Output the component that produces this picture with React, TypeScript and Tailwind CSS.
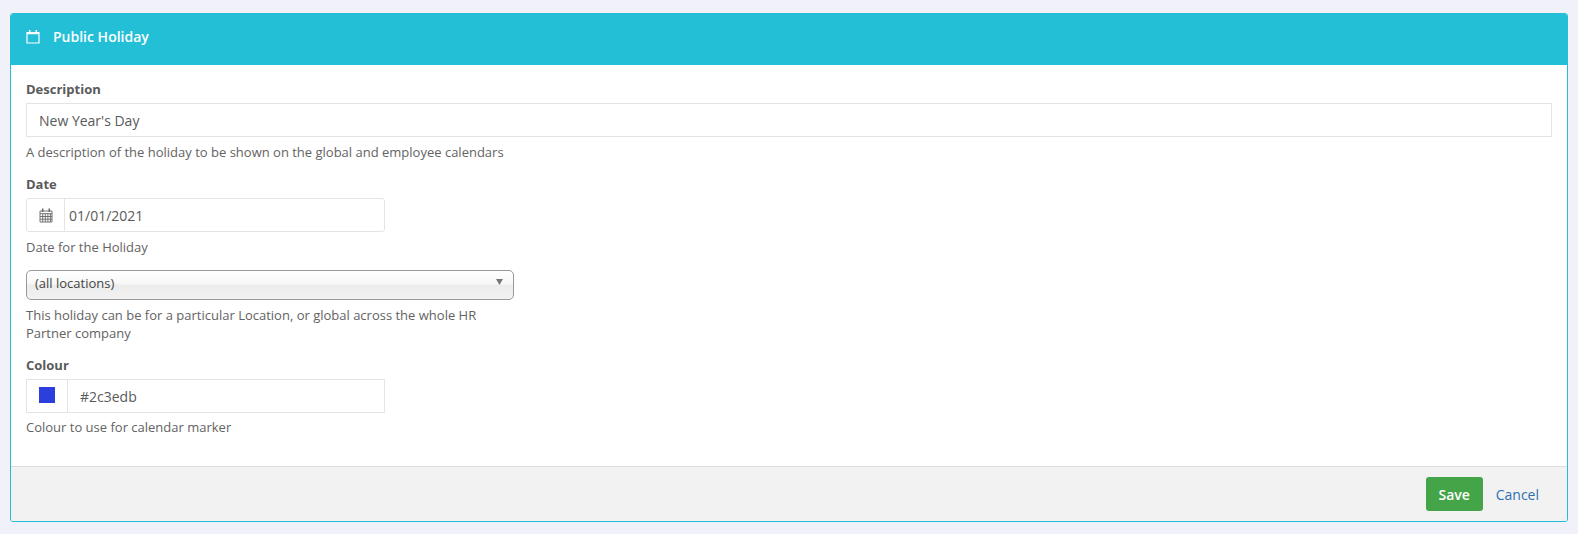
function CalendarOutline() {
  return (
    <svg width="14" height="15" viewBox="0 0 14 15" className="text-white">
      <path d="M1 3.5h12v10.5H1z" fill="none" stroke="currentColor" strokeWidth="1.2" />
      <path d="M1 4.2h12" stroke="currentColor" strokeWidth="2" />
      <path d="M3.7 1v3M10.3 1v3" stroke="currentColor" strokeWidth="1.6" />
    </svg>
  );
}

function CalendarGrid() {
  return (
    <svg width="14" height="15" viewBox="0 0 14 15" className="text-[#666666]">
      <path
        d="M1 3h12v11H1z M1 5.7h12 M1 8.5h12 M1 11.2h12 M3.7 5.7v8.3 M6.3 5.7v8.3 M8.9 5.7v8.3 M11.4 5.7v8.3"
        fill="none"
        stroke="currentColor"
        strokeWidth="0.9"
      />
      <path d="M3.7 0.5v3.5M10.3 0.5v3.5" stroke="currentColor" strokeWidth="1.5" />
    </svg>
  );
}

function Label({ children }: { children: string }) {
  return <label className="block text-[13px] leading-[18px] font-bold text-[#5a5a5a]">{children}</label>;
}

function Help({ children }: { children: string }) {
  return <p className="text-[13px] leading-[18px] text-[#636363]">{children}</p>;
}

export default function App() {
  return (
    <div className="h-[534px] bg-[#f1f2f9] pt-[13px] pl-[10px] pr-[10px] font-['Open_Sans',sans-serif]">
      <div className="flex h-[509px] flex-col overflow-hidden rounded-[3px] border border-[#23bfd7] bg-white">
        <div className="flex h-[51px] shrink-0 items-center gap-[13px] bg-[#23bfd7] pb-[7px] pl-[15px] text-[14px] font-semibold text-white">
          <CalendarOutline />
          <span>Public Holiday</span>
        </div>

        <div className="flex-1 px-[15px] pt-[15px]">
          <Label>Description</Label>
          <div className="mt-[5px] flex h-[34px] w-[1526px] items-center border border-[#e4e4e4] pl-[12px] text-[14px] text-[#5a5a5a]">
            New Year's Day
          </div>
          <div className="mt-[6px]">
            <Help>A description of the holiday to be shown on the global and employee calendars</Help>
          </div>

          <div className="mt-[14px]">
            <Label>Date</Label>
          </div>
          <div className="mt-[5px] flex h-[34px] w-[359px] rounded-[3px] border border-[#e4e4e4] text-[14px] text-[#5a5a5a]">
            <div className="flex w-[38px] items-center justify-center border-r border-[#e4e4e4]">
              <CalendarGrid />
            </div>
            <div className="flex items-center pl-[4px]">01/01/2021</div>
          </div>
          <div className="mt-[6px]">
            <Help>Date for the Holiday</Help>
          </div>

          <div className="relative mt-[14px] flex h-[30px] w-[488px] items-center rounded-[5px] border border-[#999999] bg-[linear-gradient(#ffffff_0%,#f8f8f8_45%,#ececec_52%,#f2f2f2_100%)] pl-[8px] text-[13px] text-[#444444]">
            <span className="-mt-[3px]">(all locations)</span>
            <svg width="7" height="6" viewBox="0 0 7 6" className="absolute top-[8px] right-[10px] text-[#777777]">
              <path d="M0 0h7L3.5 6z" fill="currentColor" />
            </svg>
          </div>
          <div className="mt-[6px] w-[488px]">
            <Help>This holiday can be for a particular Location, or global across the whole HR Partner company</Help>
          </div>

          <div className="mt-[14px]">
            <Label>Colour</Label>
          </div>
          <div className="mt-[5px] flex h-[34px] w-[359px] border border-[#e4e4e4] text-[14px] text-[#5a5a5a]">
            <div className="flex w-[41px] items-center justify-center border-r border-[#e4e4e4] pb-[2px]">
              <div className="h-4 w-4 bg-[#2c3edb]" />
            </div>
            <div className="flex items-center pl-[12px]">#2c3edb</div>
          </div>
          <div className="mt-[5px]">
            <Help>Colour to use for calendar marker</Help>
          </div>
        </div>

        <div className="flex h-[55px] shrink-0 items-center justify-end gap-[13px] border-t border-[#dcdcdc] bg-[#f2f2f2] pr-[28px] text-[14px]">
          <button className="h-[34px] w-[57px] rounded-[3px] bg-[#43a547] font-semibold text-white">Save</button>
          <a className="text-[#2f6fb0]">Cancel</a>
        </div>
      </div>
    </div>
  );
}
